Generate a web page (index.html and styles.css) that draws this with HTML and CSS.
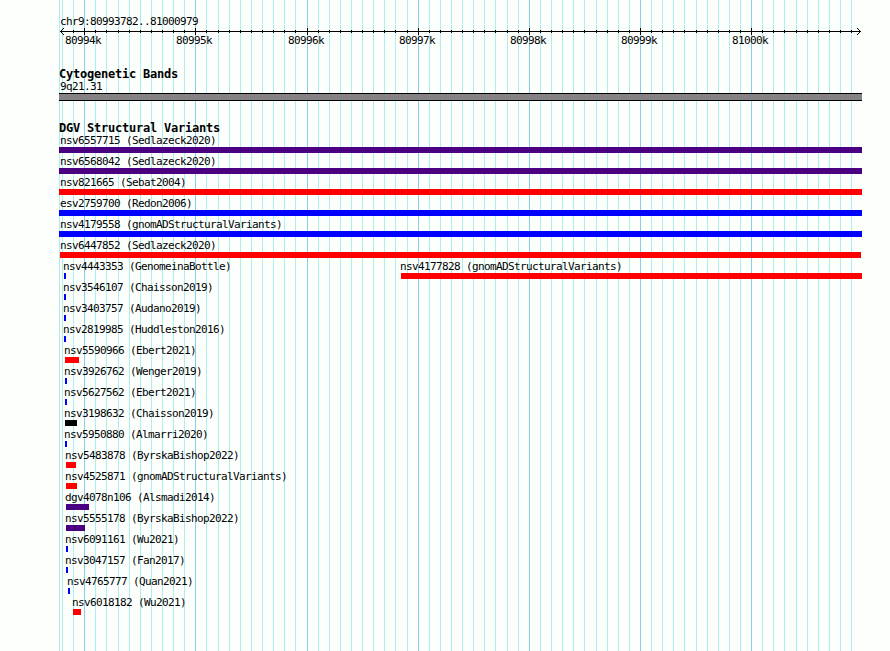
FILE: index.html
```
<!DOCTYPE html>
<html lang="en">
<head>
<meta charset="utf-8">
<title>chr9:80993782..81000979</title>
<link rel="stylesheet" href="styles.css">
</head>
<body>
<main class="browser">
<svg class="grid" id="grid" width="890" height="651" aria-hidden="true"></svg>
<header class="region">chr9:80993782..81000979</header>
<svg class="axis" id="axis" width="890" height="24"></svg>
<section class="track cyto">
<h2 class="title">Cytogenetic Bands</h2>
<div class="label band-label">9q21.31</div>
<div class="band"></div>
</section>
<section class="track variants">
<h2 class="title">DGV Structural Variants</h2>
<div id="rows"></div>
</section>
</main>
<script src="main.js"></script>
</body>
</html>
```
FILE: styles.css
```
body {
  margin: 0;
  background: #fdfffc;
  color: #000;
  font: 11px/13px "DejaVu Sans Mono", "Liberation Mono", monospace;
  letter-spacing: -0.622px;
}
.browser {
  position: relative;
  width: 890px;
  height: 651px;
  overflow: hidden;
}
.grid {
  position: absolute;
  inset: 0;
  z-index: -1;
  shape-rendering: crispEdges;
}
.minor { stroke: #afeeee; }
.major { stroke: #87ceeb; }
.region {
  height: 11px;
  padding: 15px 0 0 60px;
  line-height: 13px;
  white-space: pre;
}
.axis {
  display: block;
  fill: none;
  stroke: #000;
  shape-rendering: crispEdges;
}
.axis text {
  fill: #000;
  stroke: none;
}
.cyto { padding-top: 17px; }
.variants { padding-top: 20px; }
.title {
  margin: 0;
  padding-left: 59px;
  height: 11px;
  font-size: 12px;
  line-height: 14px;
  font-weight: bold;
  letter-spacing: -0.224px;
  white-space: pre;
}
.label {
  padding-top: 2px;
  height: 13px;
  white-space: pre;
}
.band-label { padding-left: 60px; }
.band {
  box-sizing: border-box;
  width: 803px;
  height: 8px;
  margin-left: 59px;
  background: #848284;
  border: solid #000;
  border-width: 1px 0;
}
.row { display: grid; height: 21px; }
.feature { grid-area: 1 / 1; }
.bar { height: 6px; }
.indigo { background: #4b0082; }
.red { background: #f00; }
.blue { background: #00f; }
.black { background: #000; }
```
FILE: main.js
```
const majors = [84, 195, 307, 418, 529, 640, 751];
const lines = [];
for (let i = -2; i < 70; i++) lines.push(Math.round(84.2 + i * 11.1156));
majors.forEach((x, i) => { lines[i * 10 + 2] = x; });
const minors = [59, ...lines.filter(x => !majors.includes(x))];
const path = (xs, y, h) => xs.map(x => `M${x + .5} ${y}v${h}`).join("");

document.getElementById("grid").innerHTML =
  `<path class="minor" d="${path(minors, 0, 651)}"/><path class="major" d="${path(majors, 0, 651)}"/>`;

document.getElementById("axis").innerHTML =
  `<path d="M60 5.5H861${path(minors.filter(x => x > 62), 4, 3)}${path(majors, 2, 7)}"/>` +
  `<path d="M63.5 2v1M62.5 3v1M61.5 4v1M60.5 5v1M61.5 6v1M62.5 7v1M63.5 8v1M857.5 2v1M858.5 3v1M859.5 4v1M860.5 5v1M859.5 6v1M858.5 7v1M857.5 8v1"/>` +
  majors.map((x, i) => `<text x="${x - 19}" y="18">${80994 + i}k</text>`).join("");

// Each feature: label, label x, bar x, bar width, colour.
const rows = [
  [["nsv6557715 (Sedlazeck2020)", 60, 59, 803, "indigo"]],
  [["nsv6568042 (Sedlazeck2020)", 60, 59, 803, "indigo"]],
  [["nsv821665 (Sebat2004)", 60, 59, 803, "red"]],
  [["esv2759700 (Redon2006)", 60, 59, 803, "blue"]],
  [["nsv4179558 (gnomADStructuralVariants)", 60, 59, 803, "blue"]],
  [["nsv6447852 (Sedlazeck2020)", 60, 60, 801, "red"]],
  [["nsv4443353 (GenomeinaBottle)", 63, 64, 2, "blue"],
   ["nsv4177828 (gnomADStructuralVariants)", 400, 401, 461, "red"]],
  [["nsv3546107 (Chaisson2019)", 63, 64, 2, "blue"]],
  [["nsv3403757 (Audano2019)", 63, 64, 2, "blue"]],
  [["nsv2819985 (Huddleston2016)", 63, 64, 2, "blue"]],
  [["nsv5590966 (Ebert2021)", 64, 65, 14, "red"]],
  [["nsv3926762 (Wenger2019)", 64, 65, 2, "blue"]],
  [["nsv5627562 (Ebert2021)", 64, 65, 2, "blue"]],
  [["nsv3198632 (Chaisson2019)", 64, 65, 12, "black"]],
  [["nsv5950880 (Almarri2020)", 64, 65, 2, "blue"]],
  [["nsv5483878 (ByrskaBishop2022)", 65, 66, 10, "red"]],
  [["nsv4525871 (gnomADStructuralVariants)", 65, 66, 11, "red"]],
  [["dgv4078n106 (Alsmadi2014)", 65, 66, 23, "indigo"]],
  [["nsv5555178 (ByrskaBishop2022)", 65, 66, 19, "indigo"]],
  [["nsv6091161 (Wu2021)", 65, 66, 2, "blue"]],
  [["nsv3047157 (Fan2017)", 65, 66, 2, "blue"]],
  [["nsv4765777 (Quan2021)", 67, 68, 2, "blue"]],
  [["nsv6018182 (Wu2021)", 72, 73, 8, "red"]]
];
document.getElementById("rows").innerHTML = rows.map(row =>
  `<div class="row">${row.map(([name, tx, x, w, color]) =>
    `<div class="feature"><div class="label" style="margin-left:${tx}px">${name}</div>` +
    `<div class="bar ${color}" style="margin-left:${x}px;width:${w}px"></div></div>`).join("")}</div>`).join("");
```
